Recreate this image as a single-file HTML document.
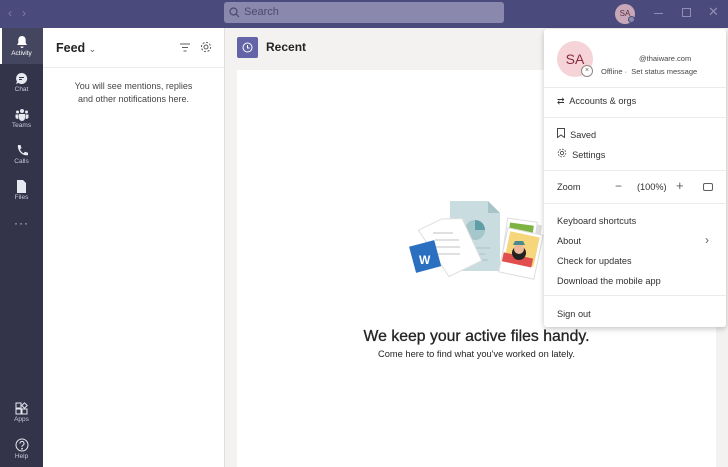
<!DOCTYPE html>
<html><head><meta charset="utf-8"><style>
*{box-sizing:border-box;margin:0;padding:0}
body{width:728px;height:467px;overflow:hidden;font-family:"Liberation Sans",sans-serif;background:#f3f2f1;position:relative;color:#252423}
.abs{position:absolute}
.top{left:0;top:0;width:728px;height:28px;background:#4b4a7d}
.search{left:224px;top:2px;width:280px;height:21px;background:#8a89ad;border-radius:3px;color:#4b4a6d;font-size:11px;line-height:21px;padding-left:20px}
.rail{left:0;top:28px;width:43px;height:439px;background:#33344a}
.ri{position:absolute;left:0;width:43px;text-align:center;color:#c8c8d8;font-size:6.5px}
.ri svg{display:block;margin:0 auto 1px}
.feed{left:43px;top:28px;width:182px;height:439px;background:#fff;border-right:1px solid #e1dfdd}
.menu{left:544px;top:29px;width:182px;height:298px;background:#fff;box-shadow:0 2px 6px rgba(0,0,0,.22);border-radius:3px;font-size:9.2px;color:#323130}
.sep{position:absolute;left:0;width:182px;height:1px;background:#edebe9}
.mi{position:absolute;left:13px}
</style></head><body>
<div class="abs top"></div>
<div class="abs" style="left:8px;top:6px;color:#7f7ea8;font-size:12px">&#8249;&nbsp;&nbsp;&nbsp;&#8250;</div>
<div class="abs search"><svg class="abs" style="left:5px;top:5px" width="11" height="11" viewBox="0 0 11 11"><circle cx="4.5" cy="4.5" r="3.5" fill="none" stroke="#4b4a6d" stroke-width="1.2"/><path d="M7 7l3 3" stroke="#4b4a6d" stroke-width="1.2"/></svg>Search</div>
<div class="abs" style="left:615px;top:4px;width:20px;height:20px;border-radius:50%;background:#c8a8b8;color:#5a3048;font-size:8px;text-align:center;line-height:20px">SA</div>
<div class="abs" style="left:628px;top:16px;width:7px;height:7px;border-radius:50%;background:#8a89ad;border:1px solid #4b4a7d"></div>
<div class="abs" style="left:654px;top:13px;width:9px;height:1px;background:#8f8eb5"></div>
<div class="abs" style="left:682px;top:8px;width:9px;height:9px;border:1px solid #8f8eb5"></div>
<div class="abs" style="left:708px;top:4px;color:#8f8eb5;font-size:13px">&#x2715;</div>

<div class="abs rail">
<div class="abs" style="left:0;top:0;width:43px;height:36px;background:#44455e"></div>
<div class="abs" style="left:0;top:0;width:2px;height:36px;background:#fff"></div>
<div class="ri" style="top:7px;color:#fff"><svg width="12" height="14" viewBox="0 0 12 14"><path d="M6 1C3.5 1 2.3 3 2.3 5v3L1 10h10L9.7 8V5C9.7 3 8.5 1 6 1z" fill="#fff"/><path d="M4.5 11.5a1.5 1.5 0 0 0 3 0" fill="#fff"/></svg>Activity</div>
<div class="ri" style="top:44px"><svg width="13" height="13" viewBox="0 0 13 13"><path d="M6.5 1a5.5 5.5 0 1 1-3 10L1 12l1-2.5A5.5 5.5 0 0 1 6.5 1z" fill="#e8e8f0"/><path d="M4 5.5h5M4 7.5h3" stroke="#33344a"/></svg>Chat</div>
<div class="ri" style="top:80px"><svg width="14" height="13" viewBox="0 0 14 13"><circle cx="7" cy="3" r="2" fill="#e8e8f0"/><circle cx="2.5" cy="4" r="1.5" fill="#e8e8f0"/><circle cx="11.5" cy="4" r="1.5" fill="#e8e8f0"/><path d="M4 6h6v4a3 3 0 0 1-6 0z M0.5 6.5h3v4a2 2 0 0 1-3-1z M10.5 6.5h3v3a2 2 0 0 1-3 1z" fill="#e8e8f0"/></svg>Teams</div>
<div class="ri" style="top:116px"><svg width="12" height="13" viewBox="0 0 12 13"><path d="M2 1l2.5 0 1 3-1.5 1.5c.8 1.7 2 3 3.5 3.7L9 7.7l3 1v2.5c-6 1-11-5-10-10.2z" fill="#e8e8f0"/></svg>Calls</div>
<div class="ri" style="top:152px"><svg width="11" height="13" viewBox="0 0 11 13"><path d="M1 0h6l3 3v10H1z" fill="#e8e8f0"/></svg>Files</div>
<div class="ri" style="top:188px;font-size:12px;letter-spacing:1px">···</div>
<div class="ri" style="top:374px"><svg width="13" height="13" viewBox="0 0 13 13" fill="none" stroke="#e8e8f0"><rect x="1" y="1" width="5" height="5"/><rect x="1" y="7" width="5" height="5"/><rect x="7" y="7" width="5" height="5"/><path d="M9.5 0.8l2.7 2.7-2.7 2.7-2.7-2.7z"/></svg>Apps</div>
<div class="ri" style="top:410px"><svg width="14" height="14" viewBox="0 0 14 14" fill="none" stroke="#e8e8f0"><circle cx="7" cy="7" r="6"/><path d="M5 5.5a2 2 0 1 1 2.7 1.8C7 7.6 7 8 7 9"/><circle cx="7" cy="10.7" r=".4"/></svg>Help</div>
</div>

<div class="abs feed">
<div class="abs" style="left:13px;top:13px;font-size:12.5px;font-weight:bold">Feed <span style="font-weight:normal;font-size:9px;color:#605e5c">&#8964;</span></div>
<svg class="abs" style="left:137px;top:15px" width="10" height="9" viewBox="0 0 10 9" stroke="#605e5c"><path d="M0 1h10M2 4.5h6M3.5 8h3"/></svg>
<svg class="abs" style="left:157px;top:13px" width="12" height="12" viewBox="0 0 12 12" fill="none" stroke="#605e5c"><circle cx="6" cy="6" r="2"/><circle cx="6" cy="6" r="4.6" stroke-dasharray="2 1.6"/></svg>
<div class="abs" style="left:0;top:39px;width:181px;height:1px;background:#edebe9"></div>
<div class="abs" style="left:0;top:52px;width:181px;text-align:center;font-size:9px;line-height:13px;color:#484644">You will see mentions, replies<br>and other notifications here.</div>
</div>

<div class="abs" style="left:237px;top:37px;width:21px;height:21px;background:#6264a7;border-radius:2px"><svg style="margin:5px" width="11" height="11" viewBox="0 0 11 11" fill="none" stroke="#fff"><circle cx="5.5" cy="5.5" r="4.5"/><path d="M5.5 3v3h2"/></svg></div>
<div class="abs" style="left:266px;top:40px;font-size:12px;font-weight:bold">Recent</div>
<div class="abs" style="left:237px;top:70px;width:479px;height:397px;background:#fff"></div>

<svg class="abs" style="left:405px;top:198px" width="140" height="90" viewBox="0 0 140 90">
<rect x="105" y="25" width="30" height="30" fill="#ddd" transform="rotate(8 120 40)"/>
<rect x="100" y="22" width="30" height="35" fill="#fff" stroke="#ddd" transform="rotate(8 115 40)"/>
<rect x="103" y="26" width="24" height="25" fill="#7cb342" transform="rotate(8 115 40)"/>
<path d="M45 3h38l12 12v58H45z" fill="#c9dde0"/>
<path d="M83 3v12h12z" fill="#a8c4c9"/>
<circle cx="70" cy="32" r="10" fill="#a5c6cb"/><path d="M70 22v10h10a10 10 0 0 0-10-10z" fill="#5f9ea6"/>
<path d="M55 50h30M55 56h25M55 62h28" stroke="#a8c4c9"/>
<rect x="98" y="33" width="36" height="45" fill="#fff" stroke="#ddd" transform="rotate(12 116 55)"/>
<rect x="101" y="36" width="30" height="30" fill="#f5d67c" transform="rotate(12 116 55)"/>
<rect x="99" y="58" width="30" height="9" fill="#e04e4e" transform="rotate(12 116 55)"/>
<circle cx="114" cy="55" r="7" fill="#222"/><circle cx="114" cy="51" r="5" fill="#f0b89a"/><path d="M108 47h12l-2-4h-8z" fill="#4a8a8e"/>
<path d="M17 27l25-7 20 3 12 45-35 10z" fill="#fff" stroke="#ddd" transform="rotate(-10 45 50)"/>
<path d="M28 35h20M30 42h24M31 49h24M33 56h22" stroke="#d5d5d5" stroke-width="1.5"/>
<rect x="7" y="45" width="26" height="27" fill="#2a6fc0" transform="rotate(-15 20 58)"/>
<text x="14" y="66" font-size="12" font-weight="bold" fill="#fff" font-family="Liberation Sans">W</text>
</svg>
<div class="abs" style="left:237px;top:328px;width:479px;text-align:center;font-size:15.8px;color:#252423;-webkit-text-stroke:0.3px #252423">We keep your active files handy.</div>
<div class="abs" style="left:237px;top:349px;width:479px;text-align:center;font-size:9.3px;color:#252423">Come here to find what you've worked on lately.</div>

<div class="abs menu">
<div class="abs" style="left:13px;top:12px;width:36px;height:36px;border-radius:50%;background:#f5d3d7;color:#8a2b3e;font-size:14px;text-align:center;line-height:36px">SA</div>
<div class="abs" style="left:37px;top:36px;width:12px;height:12px;border-radius:50%;background:#fff;border:1px solid #8a8886;font-size:7px;text-align:center;line-height:10px;color:#605e5c">×</div>
<div class="abs" style="left:95px;top:25px;font-size:7.5px;color:#484644">@thaiware.com</div>
<div class="abs" style="left:57px;top:38px;font-size:7.5px;color:#484644">Offline · &nbsp;Set status message</div>
<div class="sep" style="top:58px"></div>
<div class="mi" style="top:67px">&#8644;&nbsp; Accounts &amp; orgs</div>
<div class="sep" style="top:88px"></div>
<div class="mi" style="top:99px"><svg width="8" height="10" viewBox="0 0 8 10" fill="none" stroke="#484644"><path d="M.5.5h7v9L4 7 .5 9.5z"/></svg>&nbsp; Saved</div>
<div class="mi" style="top:119px"><svg width="10" height="10" viewBox="0 0 12 12" fill="none" stroke="#484644"><circle cx="6" cy="6" r="2"/><circle cx="6" cy="6" r="4.6" stroke-dasharray="2 1.6"/></svg>&nbsp; Settings</div>
<div class="sep" style="top:141px"></div>
<div class="mi" style="top:153px">Zoom</div>
<div class="mi" style="left:71px;top:150px;font-size:12px;color:#605e5c">&minus;</div>
<div class="mi" style="left:93px;top:153px">(100%)</div>
<div class="mi" style="left:132px;top:149px;font-size:13px;color:#605e5c">+</div>
<div class="abs" style="left:159px;top:154px;width:10px;height:8px;border:1px solid #605e5c;border-radius:2px"></div>
<div class="sep" style="top:174px"></div>
<div class="mi" style="top:187px">Keyboard shortcuts</div>
<div class="mi" style="top:207px">About</div>
<div class="mi" style="left:161px;top:204px;font-size:12px;color:#605e5c">&#8250;</div>
<div class="mi" style="top:227px">Check for updates</div>
<div class="mi" style="top:247px">Download the mobile app</div>
<div class="sep" style="top:266px"></div>
<div class="mi" style="top:280px">Sign out</div>
</div>
</body></html>
